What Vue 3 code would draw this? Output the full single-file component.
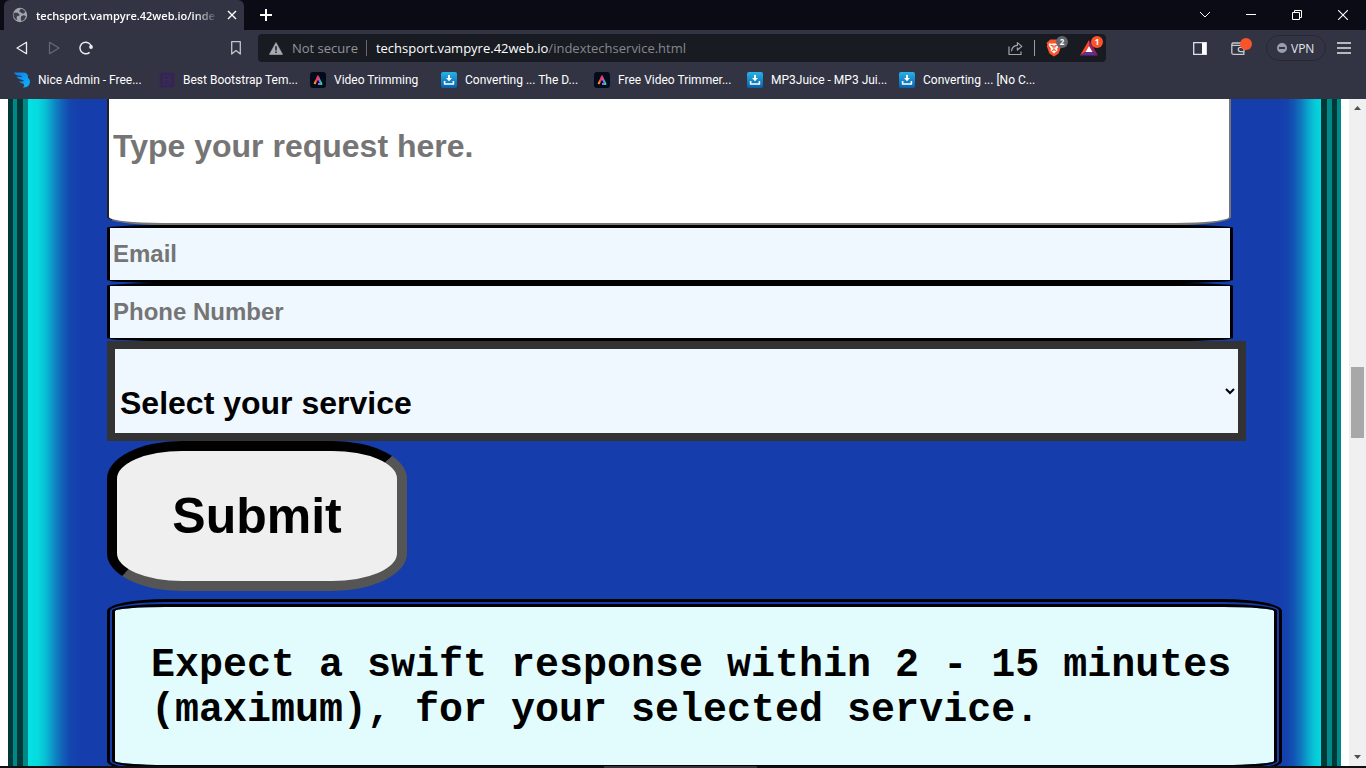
<script setup>
import { ref } from 'vue'

const bookmarks = [
  { label: 'Nice Admin - Free...', icon: 'nice', width: 145 },
  { label: 'Best Bootstrap Tem...', icon: 'boot', width: 151 },
  { label: 'Video Trimming', icon: 'adobe', width: 131 },
  { label: 'Converting ... The D...', icon: 'down', width: 153 },
  { label: 'Free Video Trimmer...', icon: 'adobe', width: 153 },
  { label: 'MP3Juice - MP3 Jui...', icon: 'down', width: 152 },
  { label: 'Converting ... [No C...', icon: 'down', width: 152 },
]
const request = ref('')
const email = ref('')
const phone = ref('')
const service = ref('Select your service')
</script>

<template>
  <div class="window">
    <svg class="defs" aria-hidden="true">
      <defs>
        <linearGradient id="niceFill" x1="0" y1="0" x2="1" y2="1">
          <stop offset="0" stop-color="#0a7fe8" /><stop offset="1" stop-color="#10b4ff" />
        </linearGradient>
        <linearGradient id="downFill" x1="0" y1="0" x2="0" y2="1">
          <stop offset="0" stop-color="#28b2e8" /><stop offset="1" stop-color="#0660ab" />
        </linearGradient>
        <linearGradient id="rainbow" x1="0" y1="1" x2="1" y2="1">
          <stop offset="0" stop-color="#ffb400" /><stop offset="0.3" stop-color="#ff2a50" />
          <stop offset="0.55" stop-color="#d04bf0" /><stop offset="0.8" stop-color="#3f8cff" />
          <stop offset="1" stop-color="#35e070" />
        </linearGradient>
      </defs>
    </svg>

    <header class="chrome">
      <div class="tabbar">
        <div class="tab">
          <svg width="16" height="16" viewBox="0 0 16 16">
            <circle cx="8" cy="8" r="7.2" fill="#a3a6ae" />
            <path d="M1.6 6.2 3.6 5.6 6 6 7.6 7.4 7.2 8.8 5.4 9 4.6 10.4 5.2 13 3.4 12.2 1.6 9.6z M8.6 1.8 11 2.2 13.4 4.6 12 6.4 10 6.6 8.4 5 7 4.4z M9.2 9.2 11.4 8.2 14 9 12.4 12.6 9.6 14.2 8.8 12z" fill="#3d404b" />
          </svg>
          <span class="tab-title">techsport.vampyre.42web.io/inde</span>
          <button class="icon-btn close-tab" aria-label="Close tab">
            <svg width="10" height="10" viewBox="0 0 10 10"><path d="M1 1 9 9M9 1 1 9" stroke="#fff" stroke-width="1.4" /></svg>
          </button>
        </div>
        <button class="icon-btn new-tab" aria-label="New tab">
          <svg width="12" height="12" viewBox="0 0 12 12"><path d="M6 0V12M0 6H12" stroke="#fff" stroke-width="2" /></svg>
        </button>
        <div class="window-controls">
          <button class="icon-btn" aria-label="Search tabs">
            <svg width="12" height="12" viewBox="0 0 12 12"><path d="M1 3 6 8 11 3" fill="none" stroke="#fff" /></svg>
          </button>
          <button class="icon-btn" aria-label="Minimize">
            <svg width="10" height="12" viewBox="0 0 10 12"><path d="M0 5.5H10" stroke="#fff" /></svg>
          </button>
          <button class="icon-btn" aria-label="Restore">
            <svg width="10" height="10" viewBox="0 0 10 10"><path d="M.5 2.5H7.5V9.5H.5zM2.5 2.5V.5H9.5V7.5H7.5" fill="none" stroke="#fff" /></svg>
          </button>
          <button class="icon-btn" aria-label="Close">
            <svg width="10" height="10" viewBox="0 0 10 10"><path d="M0 0 10 10M10 0 0 10" stroke="#fff" stroke-width="1.1" /></svg>
          </button>
        </div>
      </div>

      <div class="toolbar">
        <div class="nav">
          <button class="icon-btn" aria-label="Back">
            <svg width="14" height="14" viewBox="0 0 14 14"><path d="M11.5 1.3V12.7L2 7z" fill="none" stroke="#eceef2" stroke-width="1.3" stroke-linejoin="round" /></svg>
          </button>
          <button class="icon-btn" aria-label="Forward">
            <svg width="14" height="14" viewBox="0 0 14 14"><path d="M2.5 1.3V12.7L12 7z" fill="none" stroke="#676a76" stroke-width="1.2" stroke-linejoin="round" /></svg>
          </button>
          <button class="icon-btn" aria-label="Reload">
            <svg width="14" height="14" viewBox="0 0 14 14"><path d="M10.6 11.4A5.8 5.8 0 1 1 12.4 5.5" fill="none" stroke="#eceef2" stroke-width="1.4" /><circle cx="12" cy="6" r="1.9" fill="#eceef2" /></svg>
          </button>
        </div>
        <button class="icon-btn bookmark-btn" aria-label="Bookmark this page">
          <svg width="10" height="14" viewBox="0 0 10 14"><path d="M.7 .7H9.3V13L5 9.6 .7 13z" fill="none" stroke="#c3c5cc" stroke-width="1.3" stroke-linejoin="round" /></svg>
        </button>
        <div class="address">
          <svg width="14" height="13" viewBox="0 0 14 13"><path d="M7 .5 13.6 12.4H.4z" fill="#a9acb3" stroke="#a9acb3" stroke-linejoin="round" stroke-width=".6" /><path d="M7 4.2V8.4M7 9.6V11.1" stroke="#181b22" stroke-width="1.5" /></svg>
          <span class="not-secure">Not secure</span>
          <span class="divider"></span>
          <span class="url"><b>techsport.vampyre.42web.io</b>/indextechservice.html</span>
          <button class="icon-btn share" aria-label="Share">
            <svg width="15" height="15" viewBox="0 0 15 15"><path d="M1 5.5V13.5H13V10.5M3.5 10.3C3.8 6.7 6 4.7 9.4 4.4V1.6L13.8 5.4 9.4 9V6.5" fill="none" stroke="#a5a7ae" stroke-width="1.2" stroke-linejoin="round" /></svg>
          </button>
          <span class="divider tall"></span>
          <button class="icon-btn shields" aria-label="Brave Shields">
            <svg width="16" height="18" viewBox="0 0 16 18">
              <path d="M4.2 .6H11.8L13.6 2.2 15.4 3.8 14.7 6 15.2 7.2 12.6 14.4 8 17.6 3.4 14.4.8 7.2 1.3 6 .6 3.8 2.4 2.2z" fill="#fb542b" />
              <path d="M3.1 4.2 6 4.8 8 4.2 10 4.8 12.9 4.2 13.4 6 11 9.8 11.6 11.2 8 14.6 4.4 11.2 5 9.8 2.6 6z" fill="#fff" />
              <path d="M4.6 6.4 7.2 7 6.6 8.4M11.4 6.4 8.8 7 9.4 8.4M8 7.4V10.6M6 11.6 8 10.8 10 11.6" fill="none" stroke="#fb542b" stroke-width="1.1" />
            </svg>
            <span class="badge grey">2</span>
          </button>
          <button class="icon-btn rewards" aria-label="Brave Rewards">
            <svg width="18" height="16" viewBox="0 0 18 16">
              <path d="M9 0 0 15.5 5.4 12 9 6z" fill="#ff4724" /><path d="M9 0 18 15.5 12.6 12 9 6z" fill="#9e1f63" /><path d="M0 15.5H18L12.6 12H5.4z" fill="#662d91" /><path d="M9 6 12.6 12H5.4z" fill="#fff" />
            </svg>
            <span class="badge red">1</span>
          </button>
        </div>
        <div class="tools">
          <button class="icon-btn" aria-label="Side panel">
            <svg width="14" height="13" viewBox="0 0 14 13"><path d="M.7 .7H13.3V12.3H.7z" fill="none" stroke="#dfe1e6" stroke-width="1.3" /><path d="M9 1H13V12H9z" fill="#fff" /></svg>
          </button>
          <button class="icon-btn wallet" aria-label="Wallet">
            <svg width="14" height="13" viewBox="0 0 14 13"><path d="M12.8 4V3.4H1.6C.8 3.4.7 1 1.8 1H11.6V3M.8 2V10.8C.8 11.8 1.2 12.3 2.2 12.3H12.8V10M13 5.4H9.4A2 2 0 0 0 9.4 9.6H13z" fill="none" stroke="#c6c8ce" stroke-width="1.3" /></svg>
            <span class="dot"></span>
          </button>
          <button class="vpn"><span class="vpn-dot"></span>VPN</button>
          <button class="icon-btn" aria-label="Menu">
            <svg width="14" height="12" viewBox="0 0 14 12"><path d="M0 1H14M0 6H14M0 11H14" stroke="#e3e5e9" stroke-width="1.4" /></svg>
          </button>
        </div>
      </div>

      <nav class="bookmarks">
        <a v-for="(b, i) in bookmarks" :key="i" href="#" :style="{ width: b.width + 'px' }">
          <svg v-if="b.icon === 'nice'" width="16" height="16" viewBox="0 0 16 16"><path d="M0 .5H9C12.5 .5 14.6 2.4 13.8 5.8 15.8 7 16.4 9.4 15.6 11.6 14.8 14.2 12.6 15.6 9 15.5 10.4 14.2 10.4 12.6 9.4 11.8 8 11 6 11 4.8 9.6 7 9.8 9 9.6 10 8.8 8 7 3.6 7.6 2.6 4.4 5 5 7.4 5 8.6 4.4 6 3.4 1.4 4 0 .5z" fill="url(#niceFill)" /></svg>
          <svg v-else-if="b.icon === 'boot'" width="16" height="16" viewBox="0 0 16 16"><rect x=".5" y=".5" width="15" height="15" rx="2" fill="#30294a" stroke="#3d2759" /><path d="M5 3.5H8.8C11.5 3.5 11.5 7.5 9 7.8 12.2 8 12 12.5 9 12.5H5zM5 7.8H9" fill="none" stroke="#3f2761" stroke-width="1.5" /></svg>
          <svg v-else-if="b.icon === 'adobe'" width="16" height="16" viewBox="0 0 16 16"><rect width="16" height="16" rx="3" fill="#000b1d" /><path d="M4.6 12 8 5.2 11.4 12H8" fill="none" stroke="url(#rainbow)" stroke-width="2.2" stroke-linejoin="round" /><path d="M7 6.4 8 4.6 9 6.4" fill="none" stroke="#ff3a24" stroke-width="1.8" /></svg>
          <svg v-else width="16" height="16" viewBox="0 0 16 16"><rect width="16" height="16" rx="2" fill="url(#downFill)" /><path d="M7 3H9V6H11L8 9.2 5 6H7z" fill="#fff" /><path d="M3.6 9V12H12.4V9" fill="none" stroke="#fff" stroke-width="1.6" /></svg>
          <span>{{ b.label }}</span>
        </a>
      </nav>
    </header>

    <div class="viewport">
      <main class="page">
        <form class="request-form" @submit.prevent>
          <textarea v-model="request" aria-label="Request" placeholder="Type your request here."></textarea>
          <input v-model="email" type="email" aria-label="Email" placeholder="Email" />
          <input v-model="phone" type="tel" aria-label="Phone Number" placeholder="Phone Number" />
          <select v-model="service" aria-label="Service">
            <option>Select your service</option>
          </select>
          <button class="submit" type="submit">Submit</button>
        </form>
        <p class="notice">Expect a swift response within 2 - 15 minutes (maximum), for your selected service.</p>
      </main>
      <div class="scrollbar">
        <svg width="7" height="4" viewBox="0 0 7 4"><path d="M3.5 0 7 4H0z" fill="#505050" /></svg>
        <div class="track"><div class="thumb"></div></div>
        <svg width="7" height="4" viewBox="0 0 7 4"><path d="M3.5 4 7 0H0z" fill="#505050" /></svg>
      </div>
    </div>
    <footer class="taskbar"><span></span></footer>
  </div>
</template>

<style>
html, body { margin: 0; overflow: hidden; }
</style>

<style scoped>
* { box-sizing: border-box; }
.window { height: 100vh; display: flex; flex-direction: column; overflow: hidden; background: #fff; }
.defs { position: absolute; width: 0; height: 0; }
svg { display: block; flex: none; }
.chrome { flex: none; background: #323443; color: #fff; font: 12px "Open Sans", "Noto Sans", sans-serif; }
.icon-btn { display: flex; align-items: center; justify-content: center; flex: none; padding: 0; border: 0; background: none; position: relative; }

.tabbar { display: flex; align-items: center; height: 30px; background: #0a0b14; }
.tab { display: flex; align-items: center; align-self: stretch; width: 240px; margin-left: 4px; padding: 0 7px 0 8px; background: #323443; border-radius: 6px 6px 0 0; }
.tab-title { flex: 1; min-width: 0; margin: 0 8px; white-space: nowrap; font-size: 11px; font-weight: 600; mask-image: linear-gradient(90deg, #000 86%, transparent); }
.new-tab { margin-left: 16px; }
.window-controls { display: flex; gap: 36px; margin-left: auto; padding-right: 18px; }
.window-controls .icon-btn:first-child { margin-right: -1px; }

.toolbar { display: flex; align-items: center; height: 36px; }
.nav { display: flex; flex: none; gap: 18px; width: 231px; padding-left: 15px; }
.bookmark-btn { margin-right: 17px; }
.address { display: flex; align-items: center; flex: 1; height: 28px; padding: 0 8px 0 11px; border-radius: 4px; background: #181b22; font-size: 13px; color: #92949a; }
.not-secure { margin-left: 9px; white-space: nowrap; }
.divider { width: 1px; height: 16px; margin: 0 9px 0 8px; background: #65686f; }
.divider.tall { margin: 0 11px; background: #9b9da4; }
.url { white-space: nowrap; color: #85878d; }
.url b { font-weight: 400; color: #fff; }
.share { margin-left: auto; }
.shields { margin-right: 18px; }
.badge { position: absolute; top: -3px; left: 10px; width: 12px; height: 12px; border-radius: 6px; color: #fff; font: bold 8px/12px "Open Sans", sans-serif; text-align: center; }
.grey { background: #62656f; }
.red { left: 11px; top: -4px; background: #fb542b; }
.tools { display: flex; align-items: center; flex: none; width: 260px; padding-left: 87px; padding-right: 15px; }
.wallet { margin-left: 24px; }
.dot { position: absolute; left: 9px; top: -4px; width: 12px; height: 12px; border-radius: 6px; background: #fb542b; }
.vpn { display: flex; align-items: center; gap: 4px; margin: 0 11px 0 auto; width: 60px; height: 26px; padding: 0 0 0 10px; border: 1px solid #262833; border-radius: 13px; background: none; color: #e4e6eb; font: 12px "Open Sans", sans-serif; }
.vpn-dot { width: 10px; height: 10px; border-radius: 5px; background: linear-gradient(#323443, #323443) center / 6px 2px no-repeat, #9a9db1; }

.bookmarks { display: flex; height: 33px; padding: 6px 0 0 14px; font-family: Roboto, "Open Sans", sans-serif; }
.bookmarks a { display: flex; flex: none; gap: 8px; align-items: center; align-self: flex-start; height: 16px; color: #fff; text-decoration: none; white-space: nowrap; font-size: 12px; }

.viewport { display: flex; flex: 1; min-height: 0; overflow: hidden; padding-left: 8px; }
.page {
  flex: 1; min-width: 0; overflow: hidden; padding: 0 59px 0 99px;
  background:
    linear-gradient(90deg, #003837 5px, #008788 5px 9px, #003837 9px 15px, #008788 15px) left / 20px 100% no-repeat,
    linear-gradient(90deg, #003837 6px, #008788 6px 11px, #003837 11px 16px, #008788 16px) right / 20px 100% no-repeat,
    linear-gradient(90deg, #05e2e4, #06dade 10px, #09bdd4 18px, #0e8bc5 26px, #1262b7 34px, #1446af 42px, #153eac 52px) 20px 0 / 60px 100% no-repeat,
    linear-gradient(270deg, #05d9dd, #08c5d7 7px, #0ba5cc 13px, #0f78be 20px, #1355b3 27px, #1443ae 34px, #153eac 42px) right 20px top / 50px 100% no-repeat,
    #153eac;
}
.request-form { display: flex; flex-direction: column; align-items: flex-start; font-family: "Liberation Sans", Arial, sans-serif; }
textarea, input, select, .submit { font-family: inherit; font-weight: bold; margin: 0; }
::placeholder { color: #757575; opacity: 1; }
textarea { width: calc(100% - 51px); height: 126px; padding: 29px 4px 0; border: 2px solid; border-color: #222 #767676 #767676 #222; border-top: 0; border-radius: 0 0 56px 56px / 0 0 8px 8px; background: #fff; font-size: 32px; line-height: 37px; resize: none; overflow: hidden; }
input { width: calc(100% - 49px); height: 58px; padding: 1px 3px; border: 3px solid #000; border-radius: 56px / 3px; background: #f0f8ff; font-size: 24px; }
select { width: calc(100% - 36px); height: 100px; padding: 24px 1px 0; border: 8px solid #333; border-radius: 0; background-color: #f0f8ff; color: #000; font-size: 32px; }
.submit { width: 300px; height: 150px; padding: 0; border: 10px solid; border-color: #000 #555 #555 #000; border-radius: 25%; background: #efefef; color: #000; font-size: 50px; }
.notice { min-height: 174px; margin: 8px 0 0; padding: 36px 36px 32px; border: 8px double #000; border-radius: 59px / 12px; background: #e2fcfd padding-box; color: #000; font: bold 40px/45px "Liberation Mono", "Courier New", monospace; }

.scrollbar { display: flex; flex-direction: column; align-items: center; width: 17px; margin-left: 8px; padding: 7px 0; background: #f0f0f0; }
.track { display: flex; flex-direction: column; flex: 1; width: 13px; padding-top: 257px; }
.thumb { height: 71px; background: #a8a8a8; }
.taskbar { display: flex; justify-content: center; flex: none; height: 2px; padding-right: 6px; background: #101014; }
.taskbar span { width: 153px; background: #34363d; }
</style>
